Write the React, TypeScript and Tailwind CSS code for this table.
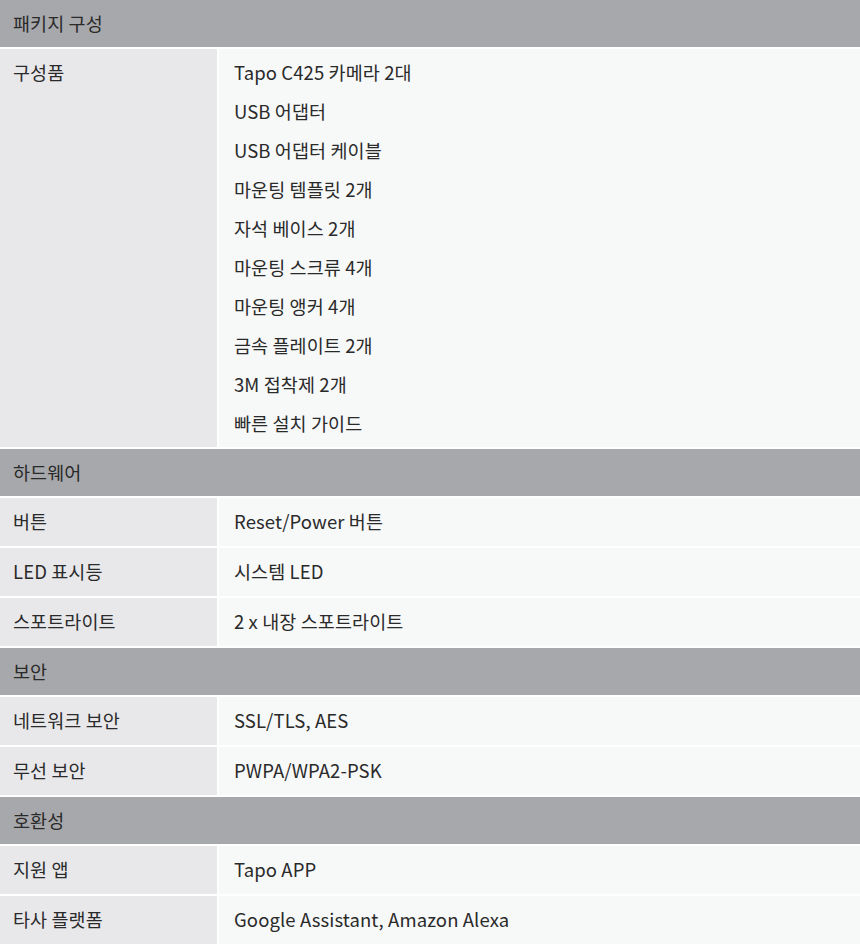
const SECTIONS: { title: string; rows: { label: string; values: string[] }[] }[] = [
  {
    title: '패키지 구성',
    rows: [
      {
        label: '구성품',
        values: [
          'Tapo C425 카메라 2대',
          'USB 어댑터',
          'USB 어댑터 케이블',
          '마운팅 템플릿 2개',
          '자석 베이스 2개',
          '마운팅 스크류 4개',
          '마운팅 앵커 4개',
          '금속 플레이트 2개',
          '3M 접착제 2개',
          '빠른 설치 가이드',
        ],
      },
    ],
  },
  {
    title: '하드웨어',
    rows: [
      { label: '버튼', values: ['Reset/Power 버튼'] },
      { label: 'LED 표시등', values: ['시스템 LED'] },
      { label: '스포트라이트', values: ['2 x 내장 스포트라이트'] },
    ],
  },
  {
    title: '보안',
    rows: [
      { label: '네트워크 보안', values: ['SSL/TLS, AES'] },
      { label: '무선 보안', values: ['PWPA/WPA2-PSK'] },
    ],
  },
  {
    title: '호환성',
    rows: [
      { label: '지원 앱', values: ['Tapo APP'] },
      { label: '타사 플랫폼', values: ['Google Assistant, Amazon Alexa'] },
    ],
  },
];

function Row({ label, values }: { label: string; values: string[] }) {
  const multi = values.length > 1;
  return (
    <div className="grid grid-cols-[217px_1fr] gap-x-[2px]">
      <div className={`bg-[#e8e8ea] pl-[13px] ${multi ? 'py-1 leading-[39px]' : 'h-[48px] flex items-center'}`}>
        {label}
      </div>
      <div className={`bg-[#f7f8f8] pl-[15px] ${multi ? 'py-1' : 'h-[48px] flex items-center'}`}>
        {values.map(v => (
          <div key={v} className={multi ? 'leading-[39px]' : ''}>{v}</div>
        ))}
      </div>
    </div>
  );
}

export default function App() {
  return (
    <div
      className="w-[860px] bg-white flex flex-col gap-[2px] text-[18.5px] tracking-[0.1px] text-[#2a2a2a]"
      style={{ fontFamily: '"Noto Sans CJK KR", "Noto Sans", sans-serif' }}
    >
      {SECTIONS.map(s => (
        <div key={s.title} className="contents">
          <div className="h-[47px] bg-[#a7a8ab] flex items-center pl-[13px]">{s.title}</div>
          {s.rows.map(r => <Row key={r.label} label={r.label} values={r.values} />)}
        </div>
      ))}
    </div>
  );
}
